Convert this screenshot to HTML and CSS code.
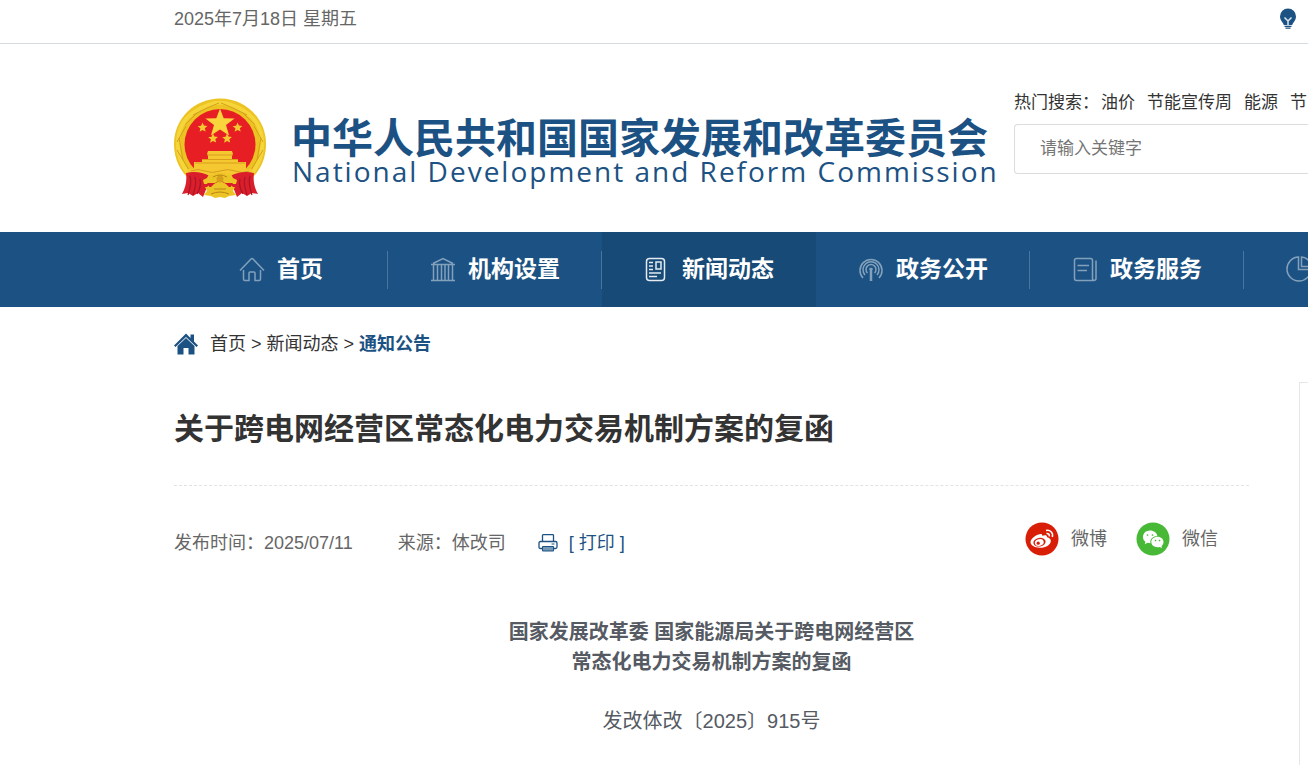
FILE: index.html
```html
<!DOCTYPE html>
<html lang="zh-CN">
<head>
<meta charset="utf-8">
<meta name="viewport" content="width=device-width, initial-scale=1">
<title>关于跨电网经营区常态化电力交易机制方案的复函</title>
<link rel="stylesheet" href="styles.css">
</head>
<body>
<div class="topbar">
  <time datetime="2025-07-18">2025年7月18日 星期五</time>
  <a class="topbar-tip" href="#">
    <svg width="18" height="21" viewBox="0 0 18 21" aria-hidden="true">
      <path fill="#1c5283" d="M9 0.5a8 8 0 0 1 8 8c0 3.6-2 5-3 6.800-.5 1-.5 1.700-1.200 1.700H5.200C4.500 17 4.500 16.300 4 15.300 3 13.500 1 12.100 1 8.500a8 8 0 0 1 8-8z"/>
      <path fill="none" stroke="#dce7ef" stroke-width="1.500" d="M5.500 9.500 9 13l3.500-3.500M9 13v5"/>
      <path fill="none" stroke="#1c5283" stroke-width="1.300" d="M5.500 18.300h7M6.500 20.200h5"/>
    </svg>
  </a>
</div>

<header class="header">
  <a class="logo" href="#">
    <svg class="emblem" width="93" height="102" viewBox="1 0 93 102" aria-hidden="true">
      <path fill="#ecc322" d="M47 .5C22 .5 1 20 1 46c0 16 7 28 16 36l12 7h36l12-7c9-8 16-20 16-36C93 20 72 .5 47 .5z"/>
      <path fill="none" stroke="#f5d53a" stroke-width="4" d="M17 78C-2 55 2 25 23 13 40 2 54 2 71 13c21 12 25 42 6 65"/>
      <path fill="none" stroke="#d3a01c" d="M12 27 25 14M20 17l14-7M34 10l12-5M82 27 69 14M74 17l-14-7M60 10 48 5M4 44l9-16M4 52l12 20M90 44l-9-16M90 52 78 72M6 40l4 22M88 40l-4 22"/>
      <circle cx="47" cy="46.500" r="35.500" fill="#e71f25"/>
      <path fill="#f9d43c" d="m47 10.500 3.700 9.700 10.900.3-8.600 6.600 3.100 10.400-9.100-6-9.100 6 3.100-10.400-8.600-6.600 10.900-.3z"/>
      <g fill="#f5c832">
        <path id="star" d="m29.500 24.500 1.400 3.100 3.500.3-2.600 2.300.9 3.400-3.200-1.700-2.900 1.900.8-3.500-2.800-2.100 3.500-.4z"/>
        <use href="#star" x="35"/><use href="#star" x="10.500" y="11"/><use href="#star" x="24.500" y="11"/>
        <path d="M35 53h24l1 3-1 1v4h6v3h8v7h7c-3 6-6 9-9 11H23c-3-2-6-5-9-11h7v-7h8v-3h6v-4l-1-1z"/>
      </g>
      <path stroke="#d99d1a" fill="none" d="M34 57h26M29 61.500h36M22 65h50M18 73q7-3 14 0t15 0 15 0 14 0"/>
      <path fill="#da1e2b" d="M13 75c8-2 16-1 24 3l6 4-6 4-3 3-4 10-5-4-5 3-5-3-6 1c4-7 5-14 4-21zM81 75c-8-2-16-1-24 3l-6 4 6 4 3 3 4 10 5-4 5 3 5-3 6 1c-4-7-5-14-4-21z"/>
      <path stroke="#a71625" stroke-width="1.200" fill="none" d="M17 78c2 6 0 13-2 19M22 79c2 6 0 12-2 18M27 81c1 5 0 10-3 15M77 78c-2 6 0 13 2 19M72 79c-2 6 0 12 2 18M67 81c-1 5 0 10 3 15"/>
      <path fill="#edc426" d="m40 77 2-2h10l2 2 4-1 2 4 4 2-1 4h-8l-2 4H41l-2-4h-8l-1-4 4-2 2-4z"/>
      <path fill="#da1e2b" d="M34 85h8q5-5 10 0h8l-3 5H37z"/>
      <path fill="#edc426" d="M41 86q6-5 12 0l3 3h6l-2 4 3 4-7 1-4 2-5-1-5 1-4-2-7-1 3-4-2-4h6z"/>
      <circle cx="47" cy="81" r="3.500" fill="#d59e1b"/>
      <path fill="none" stroke="#b98414" d="M40 79q7-4 14 0M38 96q9-4 18 0M41 91h12"/>
    </svg>
    <span class="logo-text">
      <span class="logo-cn">中华人民共和国国家发展和改革委员会</span>
      <span class="logo-en" lang="en">National Development and Reform Commission</span>
    </span>
  </a>
  <form class="search">
    <div class="hot"><label for="keyword">热门搜索：</label><span class="hot-links"><a href="#">油价</a><a href="#">节能宣传周</a><a href="#">能源</a><a href="#">节能</a></span></div>
    <input id="keyword" class="search-input" type="text" placeholder="请输入关键字">
  </form>
</header>

<nav class="nav">
  <a class="nav-item" href="#">
    <svg class="nav-icon" viewBox="0 0 26 26"><path d="M1 14.500 12 3q1-1 2 0l11 11.500M4.500 14v9q0 1.500 1.500 1.500h4V17q0-1 1-1h4q1 0 1 1v7.500h4q1.500 0 1.500-1.500v-9"/></svg>
    <span>首页</span>
  </a>
  <a class="nav-item" href="#">
    <svg class="nav-icon" viewBox="0 0 26 26"><path d="M1 24.500h24M1 8.500h24M3 7.500l10-5 10 5M3.500 9v15M7.500 9v15M11.500 9v15M15 9v15M18.500 9v15M22.500 9v15"/></svg>
    <span>机构设置</span>
  </a>
  <a class="nav-item nav-item-active" href="#" aria-current="page">
    <svg class="nav-icon" viewBox="0 0 26 26"><rect x="2.500" y="2.500" width="18" height="22" rx="3"/><path d="M5 6.500h4M5 10h4M5 13.500h4M5 17h12M5 20.500h8M12 6h5v7h-5z"/></svg>
    <span>新闻动态</span>
  </a>
  <a class="nav-item" href="#">
    <svg class="nav-icon" viewBox="0 0 26 26"><path d="M5 22a11 11 0 1 1 16 0M7 19a8 8 0 1 1 12 0M9.500 17a5 5 0 1 1 7 0M11.500 13.500q1.500-2 3 0"/><path stroke-width="2.500" d="M13 13v12"/></svg>
    <span>政务公开</span>
  </a>
  <a class="nav-item" href="#">
    <svg class="nav-icon" viewBox="0 0 26 26"><path d="M20.500 22V4.500q0-2-2-2h-14q-2 0-2 2v18q0 2 2 2h17q2.500 0 2.500-2v-18M20.500 22q0 2.500 1.500 2.500M5.500 9.500H17M5.500 14.500H15"/></svg>
    <span>政务服务</span>
  </a>
  <a class="nav-item nav-item-last" href="#">
    <svg class="nav-icon" viewBox="0 0 26 26"><path d="M12.500 1A12 12 0 1 0 25 13.500H12.500zM15.500 1v9.500H25A10 10 0 0 0 15.500 1z"/></svg>
  </a>
</nav>

<div class="crumbs">
  <svg width="24" height="22" viewBox="0 0 24 22" aria-hidden="true"><path fill="#1c5283" d="M12 .5 16.500 5V1.500H20v7l4 4-1.500 1.500L12 4 1.500 14 0 12.500z"/><path fill="#1c5283" d="m12 5 8.500 8v8.500h-6V15h-5v6.500h-6V13z"/></svg>
  <span><a href="#">首页</a> &gt; <a href="#">新闻动态</a> &gt; <a class="crumb-current" href="#">通知公告</a></span>
</div>

<div class="page">
  <main class="article">
    <h1 class="title">关于跨电网经营区常态化电力交易机制方案的复函</h1>
    <div class="meta">
      <span class="published">发布时间：2025/07/11</span>
      <span class="source">来源：体改司</span>
      <button class="print" type="button">
        <svg width="20" height="18" viewBox="0 0 20 18" aria-hidden="true"><path fill="#fff" stroke="#1c5283" stroke-width="1.300" d="M4.500 7.500v-6q0-.8.800-.8h9.400q.8 0 .8.800v6M4 14.500H2.500Q1 14.500 1 13V9q0-1.500 1.500-1.500h15Q19 7.500 19 9v4q0 1.500-1.500 1.500H16"/><path fill="#7798b5" stroke="#1c5283" d="M4.500 12.500h11v4.500h-11z"/><path stroke="#1c5283" d="M13.500 10h3"/></svg>
        <span>[ 打印 ]</span>
      </button>
      <div class="share">
        <a href="#">
          <svg width="34" height="34" viewBox="0 0 34 34" aria-hidden="true"><circle cx="17" cy="17" r="16.500" fill="#d81e06"/><path fill="#fff" d="M13.500 12.500c2-1 4-.8 3.800 1.300 2-1 5-1.100 4.700 1.400 3 .8 4.600 2.600 3.500 5.300-1.400 3.500-6.500 5.500-11 5.300-5-.2-9-2.400-9-5.700 0-2.800 4-6.300 8-7.600z"/><ellipse cx="14.500" cy="20.200" rx="6.200" ry="4.300" fill="#d81e06" transform="rotate(-10 14.500 20.200)"/><ellipse cx="14.300" cy="20.500" rx="4.500" ry="3.300" fill="#fff" transform="rotate(-15 14.300 20.500)"/><circle cx="13.200" cy="21.200" r="1.600" fill="#d81e06"/><path fill="none" stroke="#fff" stroke-width="1.500" d="M21 8.500c4.500-.8 7.500 2.500 6.300 6.500M21.500 11.500c2-.3 3.200 1 2.700 2.900"/></svg>
          <span>微博</span>
        </a>
        <a href="#">
          <svg width="34" height="34" viewBox="0 0 34 34" aria-hidden="true"><circle cx="17" cy="17" r="16.500" fill="#48b936"/><path fill="#fff" d="M14 8.500c4 0 7 2.400 7.300 5.500-4 .2-7 2.700-7 6.200l.1 1-2.900-.4-2.700 1.500.6-2.500C7.900 18.600 7 17 7 15c0-3.700 3-6.500 7-6.500z"/><path fill="#fff" d="M21.500 14.800c3.600 0 6 2.400 6 5.200 0 1.600-.8 3-2 4l.4 2-2.200-1.100c-4.800 1-8.400-1.400-8.400-4.900 0-2.900 2.600-5.200 6.200-5.200z"/><path stroke="#48b936" stroke-width="1.700" stroke-linecap="round" d="M11.500 13h.01M16.500 13h.01M19.500 18.500h.01M23.500 18.500h.01"/></svg>
          <span>微信</span>
        </a>
      </div>
    </div>
    <div class="content">
      <p><strong>国家发展改革委 国家能源局关于跨电网经营区<br>常态化电力交易机制方案的复函</strong></p>
      <p>发改体改〔2025〕915号</p>
    </div>
  </main>
  <aside class="side"></aside>
</div>
</body>
</html>
```

FILE: styles.css
```css
:root {
  --blue: #1c5283;
  --indent: 174px;
}

* { box-sizing: border-box; }

body {
  margin: 0;
  min-height: 100vh;
  display: flex;
  flex-direction: column;
  overflow: hidden;
  background: #fff;
  color: #333;
  font: 18px/24px "Liberation Sans", "Noto Sans CJK SC", sans-serif;
}

a { color: inherit; text-decoration: none; }
svg { display: block; flex: none; }
p { margin: 0; }

.topbar {
  display: flex;
  justify-content: space-between;
  padding: 7px 11px 12px var(--indent);
  border-bottom: 1px solid #d3dce1;
  color: #666;
}
.topbar-tip { padding-top: 1px; }

.header {
  display: flex;
  gap: 23px;
  padding: 47px 0 32px var(--indent);
}
.logo {
  display: flex;
  flex: none;
  gap: 24px;
  padding-top: 7px;
  color: var(--blue);
}
.logo-text {
  display: flex;
  flex-direction: column;
  width: 700px;
  padding-top: 21px;
  white-space: nowrap;
}
.logo-cn { font-size: 41px; line-height: 40px; font-weight: 700; }
.logo-en {
  padding-left: 1px;
  font: 28px/24px "Open Sans", sans-serif;
  letter-spacing: 2px;
}

.search {
  flex: 1;
  min-width: 0;
  overflow: hidden;
  white-space: nowrap;
}
.hot {
  display: flex;
  gap: 2px;
  padding-bottom: 9px;
  font-size: 17px;
}
.hot-links { display: flex; gap: 12px; }
.search-input {
  display: block;
  width: 100%;
  height: 50px;
  padding: 0 0 1px 25px;
  border: 1px solid #dcdcdc;
  border-right: 0;
  border-radius: 4px 0 0 4px;
  background: #fff;
  font: 17px/24px "Liberation Sans", "Noto Sans CJK SC", sans-serif;
}
.search-input::placeholder { color: #757575; opacity: 1; }

.nav {
  display: flex;
  padding-left: var(--indent);
  overflow: hidden;
  background: var(--blue);
  color: #fff;
}
.nav-item {
  display: flex;
  flex: 0 0 214px;
  justify-content: center;
  align-items: center;
  gap: 12px;
  height: 75px;
  padding-bottom: 2px;
  font-size: 23px;
  line-height: 36px;
  font-weight: 700;
  background: linear-gradient(#4a75a0, #4a75a0) right center / 1px 38px no-repeat;
}
.nav-item-active { background: #174a77; }
.nav-item-last { justify-content: flex-start; padding-left: 42px; }
.nav-icon {
  width: 26px;
  height: 26px;
  fill: none;
  stroke: #84a1bc;
  stroke-width: 1.5;
}
.nav-item-active .nav-icon { stroke: #e4ebf1; }

.crumbs {
  display: flex;
  align-items: center;
  gap: 12px;
  padding: 25px 0 26px var(--indent);
}
.crumb-current { color: var(--blue); font-weight: 700; }

.page {
  display: grid;
  grid-template-columns: minmax(0, 1fr) 9px;
  gap: 50px;
  flex: 1;
  padding-left: var(--indent);
}
.side {
  border: 1px solid #e6e6e6;
  border-width: 1px 0 0 1px;
}
.title {
  margin: 0;
  padding: 25px 0 34px;
  border-bottom: 1px dashed #e3e3e3;
  font-size: 30px;
  line-height: 44px;
}
.meta {
  display: flex;
  align-items: center;
  padding-top: 36px;
  color: #666;
}
.published { margin-right: 45px; }
.source { margin-right: 32px; }
.print {
  display: flex;
  align-items: center;
  gap: 11px;
  padding: 0;
  border: 0;
  background: none;
  color: var(--blue);
  font: inherit;
}
.share {
  display: flex;
  gap: 29px;
  margin-left: auto;
  padding: 0 31px 8px 0;
}
.share a { display: flex; align-items: center; gap: 12px; }

.content {
  display: grid;
  gap: 29px;
  padding-top: 53px;
  color: #555a63;
  font-size: 20px;
  line-height: 30px;
  text-align: center;
}
```
